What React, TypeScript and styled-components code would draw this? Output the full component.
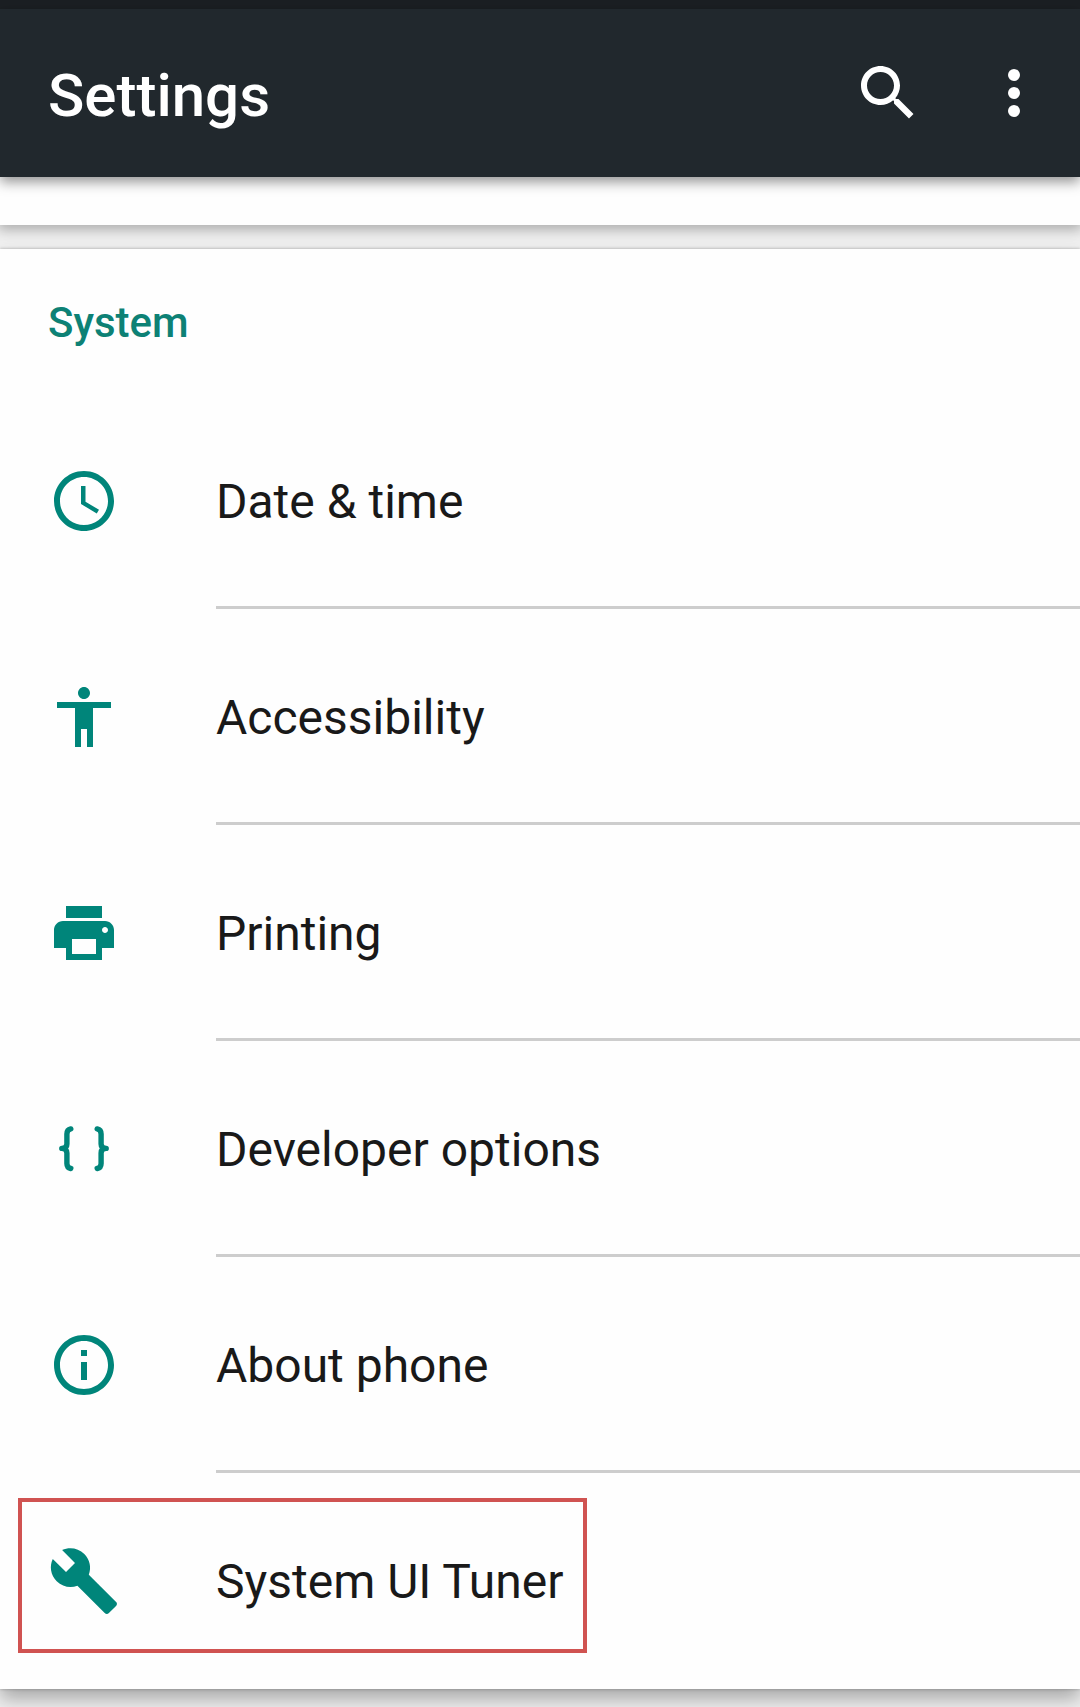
import React from "react";
import styled, { createGlobalStyle } from "styled-components";

const GlobalStyle = createGlobalStyle`
  *, *::before, *::after { box-sizing: border-box; }
  body {
    margin: 0;
    background: #f0f0f0;
    font-family: Roboto, "Liberation Sans", sans-serif;
  }
`;

const Screen = styled.div`
  display: flex;
  flex-direction: column;
  min-height: 100vh;
  overflow: hidden;
  background: #f0f0f0;
`;

const StatusStrip = styled.div`
  height: 9px;
  background: #1b1f23;
`;

const AppBar = styled.header`
  position: relative;
  z-index: 2;
  display: flex;
  align-items: center;
  gap: 54px;
  height: 168px;
  padding: 0 30px 0 48px;
  background: #21282d;
  color: #ffffff;
  box-shadow: 0 5px 12px rgba(0, 0, 0, 0.42);
`;

const Title = styled.h1`
  flex: 1;
  margin: 0;
  padding-top: 6px;
  font-size: 60px;
  font-weight: 500;
  line-height: 72px;
`;

const IconButton = styled.button`
  display: flex;
  padding: 0;
  border: 0;
  background: none;
  color: inherit;
  cursor: pointer;
`;

const Icon = styled.svg`
  display: block;
  flex: none;
  width: 72px;
  height: 72px;
  fill: currentColor;
`;

const Cards = styled.main`
  display: flex;
  flex-direction: column;
  gap: 24px;
`;

const PreviousCard = styled.div`
  height: 48px;
  background: #fefefe;
  box-shadow: 0 3px 12px 2px rgba(0, 0, 0, 0.28);
`;

const Card = styled.section`
  background: #fefefe;
  box-shadow: 0 0 3px rgba(0, 0, 0, 0.28), 0 10px 18px rgba(0, 0, 0, 0.3);
`;

const CategoryTitle = styled.h2`
  display: flex;
  align-items: center;
  height: 144px;
  margin: 0;
  padding: 4px 48px 0;
  color: #0d8175;
  font-size: 42px;
  font-weight: 500;
  line-height: 48px;
`;

const List = styled.ul`
  margin: 0;
  padding: 0;
  list-style: none;
`;

const Item = styled.li`
  position: relative;
`;

const Row = styled.a`
  display: flex;
  align-items: center;
  gap: 96px;
  height: 216px;
  padding-left: 48px;
  color: #00857a;
  text-decoration: none;
`;

const Label = styled.span<{ $divided: boolean }>`
  display: flex;
  flex: 1;
  align-items: center;
  align-self: stretch;
  padding-top: 2px;
  color: #191919;
  font-size: 48px;
  line-height: 56px;
  box-shadow: ${(p) => (p.$divided ? "inset 0 -3px #cdcdcd" : "none")};
`;

const Highlight = styled.div`
  position: absolute;
  top: 25px;
  left: 18px;
  width: 569px;
  height: 155px;
  border: 4px solid #d05351;
  pointer-events: none;
`;

const items = [
  {
    label: "Date & time",
    icon: (
      <path d="M11.99 2C6.47 2 2 6.48 2 12s4.47 10 9.99 10C17.52 22 22 17.52 22 12S17.52 2 11.99 2zM12 20c-4.42 0-8-3.58-8-8s3.58-8 8-8 8 3.58 8 8-3.58 8-8 8zm.5-13H11v6l5.25 3.15.75-1.23-4.5-2.67z" />
    ),
  },
  {
    label: "Accessibility",
    icon: (
      <path d="M12 2c1.1 0 2 .9 2 2s-.9 2-2 2-2-.9-2-2 .9-2 2-2zm9 7h-6v13h-2v-6h-2v6H9V9H3V7h18v2z" />
    ),
  },
  {
    label: "Printing",
    icon: (
      <path d="M19 8H5c-1.66 0-3 1.34-3 3v6h4v4h12v-4h4v-6c0-1.66-1.34-3-3-3zm-3 11H8v-5h8v5zm3-7c-.55 0-1-.45-1-1s.45-1 1-1 1 .45 1 1-.45 1-1 1zm-1-9H6v4h12V3z" />
    ),
  },
  {
    label: "Developer options",
    icon: (
      <g
        fill="none"
        stroke="currentColor"
        strokeWidth="1.8"
        strokeLinecap="round"
        strokeLinejoin="round"
      >
        <path d="M7.6 5.3C6.7 5.5 6.3 6.1 6.3 7V10.3C6.3 11.2 5.800 11.8 4.600 11.8C5.800 11.8 6.300 12.400 6.300 13.300V16.800C6.300 17.700 6.700 18.300 7.600 18.500" />
        <path d="M16.400 5.300C17.300 5.500 17.700 6.100 17.700 7V10.300C17.700 11.200 18.200 11.800 19.400 11.800C18.200 11.800 17.700 12.400 17.700 13.300V16.800C17.700 17.700 17.300 18.300 16.400 18.500" />
      </g>
    ),
  },
  {
    label: "About phone",
    icon: (
      <path d="M11 17h2v-6h-2v6zm1-15C6.480 2 2 6.480 2 12s4.480 10 10 10 10-4.480 10-10S17.520 2 12 2zm0 18c-4.410 0-8-3.590-8-8s3.590-8 8-8 8 3.590 8 8-3.590 8-8 8zM11 9h2V7h-2v2z" />
    ),
  },
  {
    label: "System UI Tuner",
    highlighted: true,
    icon: (
      <path d="M22.700 19l-9.100-9.100c.9-2.300.4-5-1.500-6.900-2-2-5-2.400-7.400-1.300L9 6 6 9 1.600 4.700C.4 7.100.9 10.100 2.900 12.100c1.900 1.900 4.600 2.400 6.900 1.500l9.100 9.100c.4.4 1 .4 1.400 0l2.300-2.300c.5-.4.5-1.100.1-1.400z" />
    ),
  },
];

export default function App() {
  return (
    <>
      <GlobalStyle />
      <Screen>
        <StatusStrip />
        <AppBar>
          <Title>Settings</Title>
          <IconButton type="button" aria-label="Search">
            <Icon viewBox="0 0 24 24" aria-hidden="true">
              <path d="M15.500 14h-.79l-.28-.27C15.410 12.590 16 11.110 16 9.500 16 5.910 13.090 3 9.500 3S3 5.910 3 9.500 5.910 16 9.500 16c1.610 0 3.090-.59 4.230-1.570l.27.28v.79l5 4.990L20.490 19l-4.990-5zm-6 0C7.010 14 5 11.990 5 9.500S7.010 5 9.500 5 14 7.010 14 9.500 11.990 14 9.500 14z" />
            </Icon>
          </IconButton>
          <IconButton type="button" aria-label="More options">
            <Icon viewBox="0 0 24 24" aria-hidden="true">
              <circle cx="12" cy="6" r="2" />
              <circle cx="12" cy="12" r="2" />
              <circle cx="12" cy="18" r="2" />
            </Icon>
          </IconButton>
        </AppBar>
        <Cards>
          <PreviousCard />
          <Card aria-labelledby="system-title">
            <CategoryTitle id="system-title">System</CategoryTitle>
            <List>
              {items.map((item, i) => (
                <Item key={item.label}>
                  <Row href="#">
                    <Icon viewBox="0 0 24 24" aria-hidden="true">
                      {item.icon}
                    </Icon>
                    <Label $divided={i < items.length - 1}>{item.label}</Label>
                  </Row>
                  {item.highlighted && <Highlight />}
                </Item>
              ))}
            </List>
          </Card>
        </Cards>
      </Screen>
    </>
  );
}
